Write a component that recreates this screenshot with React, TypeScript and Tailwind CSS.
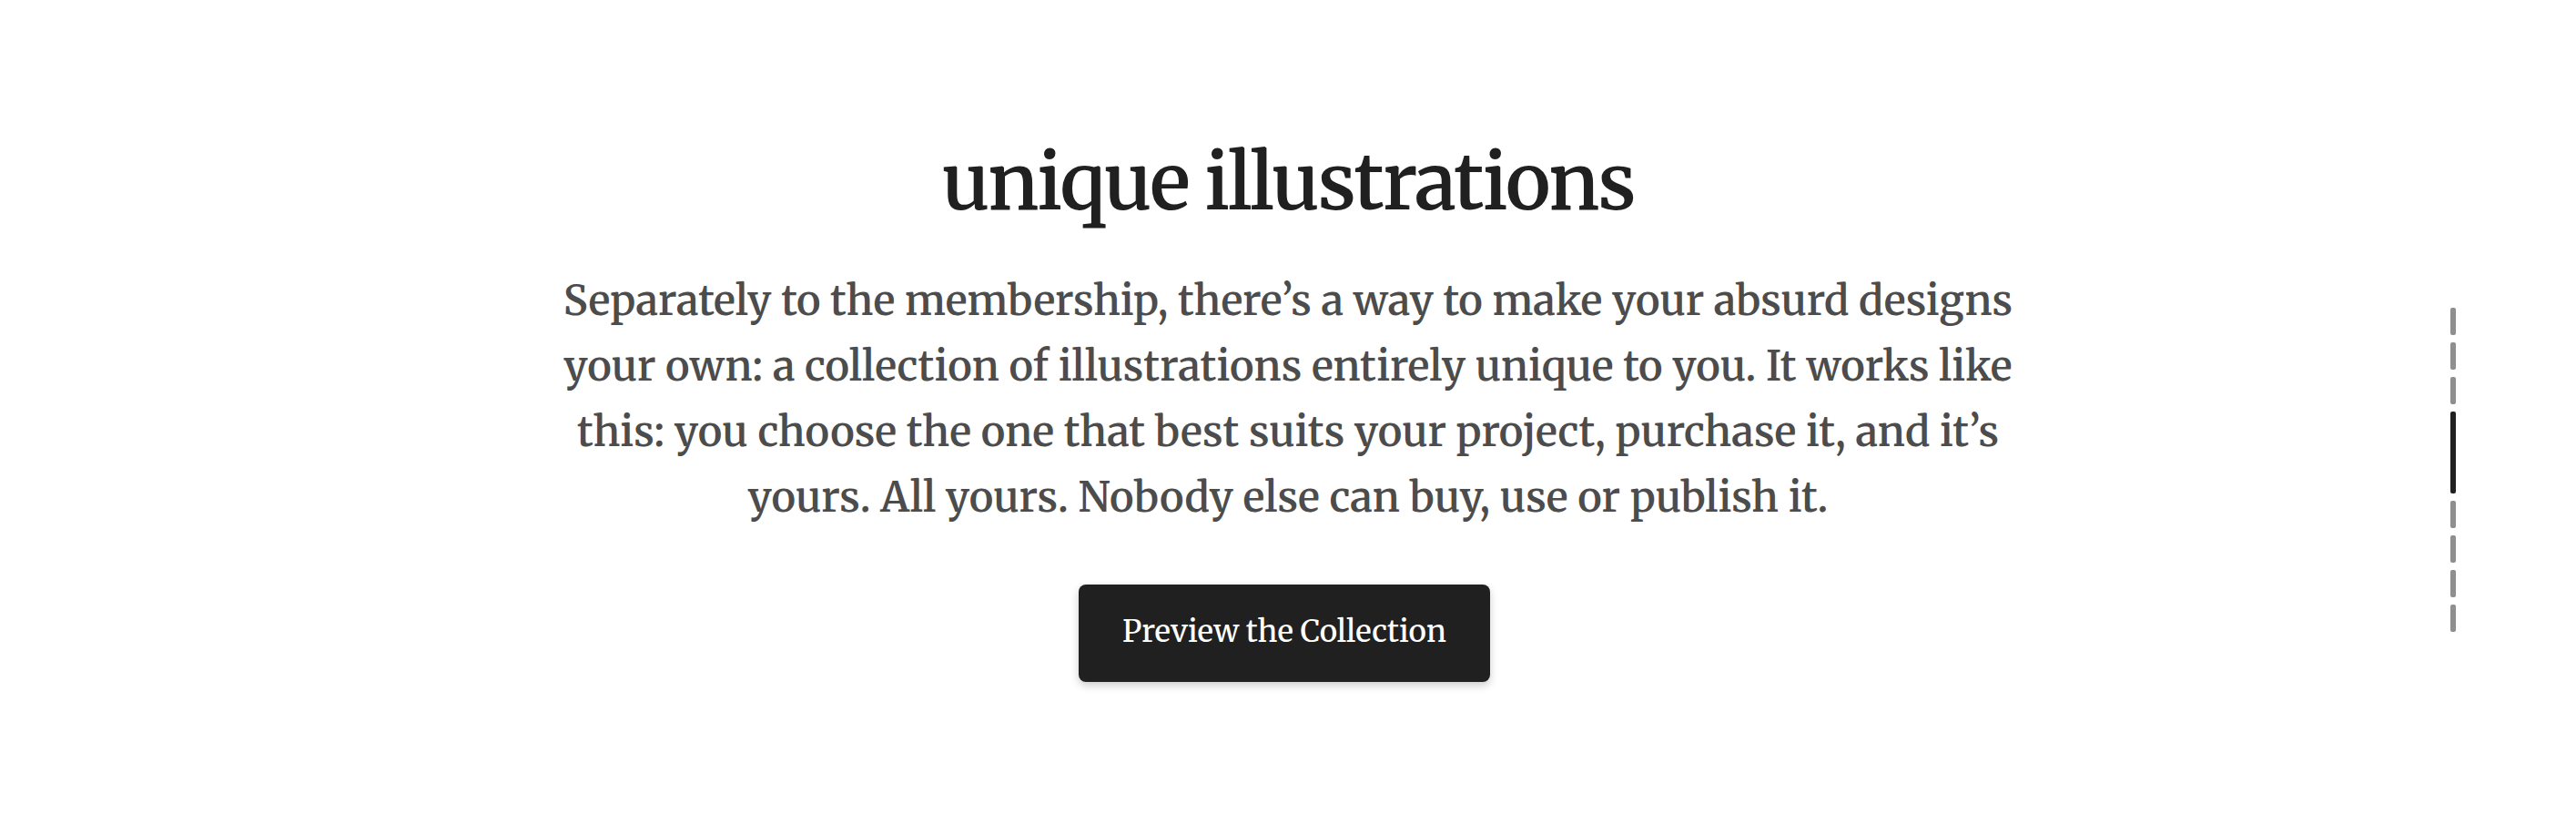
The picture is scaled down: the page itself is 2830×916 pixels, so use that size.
import React from "react";

const sections = [
  "Intro",
  "Membership",
  "Library",
  "Unique illustrations",
  "Examples",
  "Pricing",
  "Questions",
  "Contact",
];

const activeSection = 3;

function SectionNav() {
  return (
    <nav aria-label="Sections" className="fixed right-[132px] top-[338px] flex flex-col gap-2">
      {sections.map((name, i) => (
        <a
          key={name}
          href={`#section-${i + 1}`}
          aria-label={name}
          className={
            i === activeSection
              ? "block h-[90px] w-1.5 rounded-xs bg-[#202020]"
              : "block h-[30px] w-1.5 rounded-xs bg-[#8f8f8f]"
          }
        />
      ))}
    </nav>
  );
}

export default function App() {
  return (
    <main className="min-h-screen bg-white font-['Merriweather','DejaVu_Serif_Condensed','DejaVu_Serif',serif]">
      <section className="mx-auto flex max-w-[1640px] flex-col items-center px-4 pt-[140px] pb-40 text-center">
        <h1 className="text-[84px] leading-[120px] font-semibold tracking-tight text-[#202020]">unique illustrations</h1>
        <p className="mt-[34px] text-[45px] leading-[72px] font-semibold text-[#4c4c4c]">
          Separately to the membership, there’s a way to make your absurd designs your own: a collection of
          illustrations entirely unique to you. It works like this: you choose the one that best suits your
          project, purchase it, and it’s yours. All yours. Nobody else can buy, use or publish it.
        </p>
        <button
          type="button"
          className="mt-[60px] mr-2 rounded-lg bg-[#202020] px-12 pt-7 pb-[31px] text-[33px] leading-12 font-medium text-white shadow-[0_4px_10px_rgba(0,0,0,0.2)]"
        >
          Preview the Collection
        </button>
      </section>
      <SectionNav />
    </main>
  );
}
